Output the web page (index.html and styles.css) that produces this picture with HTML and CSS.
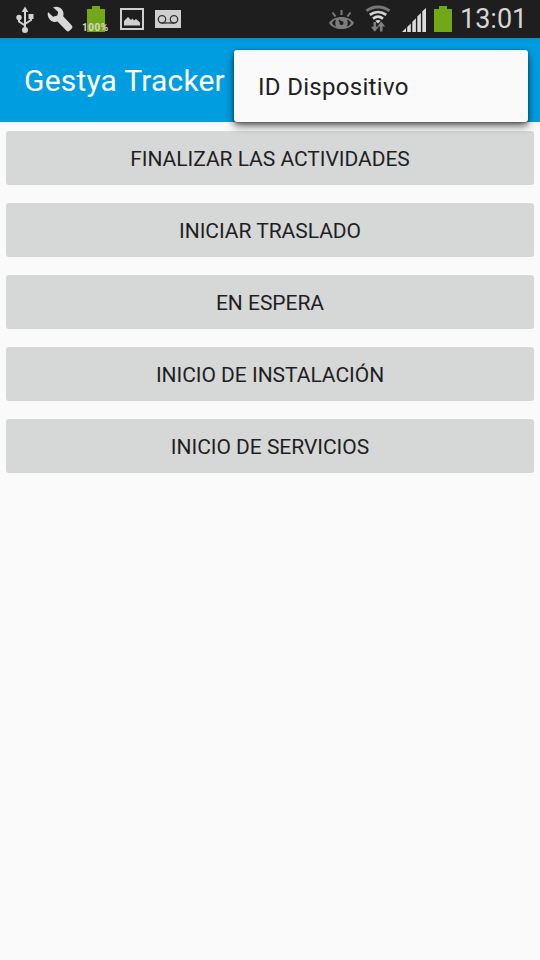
FILE: index.html
```html
<!DOCTYPE html>
<html lang="es">
<head>
    <meta charset="UTF-8">
    <meta name="viewport" content="width=device-width, initial-scale=1.0">
    <title>Gestya Tracker</title>
    <link rel="stylesheet" href="styles.css">
</head>
<body>
    <div class="status-bar">
        <div class="status-left">
            <svg class="icon-usb" width="18" height="28" viewBox="0 0 18 28">
                <path d="M9 4v20M3 12v3.500l6 4M15 11v3l-6 4" fill="none" stroke="#d2d2d2" stroke-width="2"/>
                <path d="M9 0.500l3.300 5.500H5.700z" fill="#d2d2d2"/>
                <circle cx="3" cy="11.500" r="2.700" fill="#d2d2d2"/>
                <rect x="12.500" y="8" width="5" height="5" fill="#d2d2d2"/>
                <circle cx="9" cy="24" r="3" fill="#d2d2d2"/>
            </svg>
            <svg class="icon-wrench" width="26" height="27" viewBox="0 0 26 27">
                <path d="M6 1.200C9.500 0 13 .8 15 3.500c1.700 2.300 1.800 4.500 1.200 6.800l8.600 9.200c.8.9.8 2 0 2.900l-2.300 2.400c-.9.900-2.100.9-3 0l-9-9.200c-2.500.7-5.300.2-7.300-1.700C.9 11.700.2 8.700 1 6l5 4.700 4.300-1.200.9-3.600z" fill="#d8d8d8"/>
            </svg>
            <div class="battery-level">
                <svg width="18" height="26" viewBox="0 0 18 26">
                    <path d="M5 0h8v3h5v23H0V3h5z" fill="#72a818"/>
                </svg>
                <span class="battery-text">100%</span>
            </div>
            <svg class="icon-picture" width="24" height="22" viewBox="0 0 24 22">
                <rect x="1" y="1" width="22" height="20" fill="none" stroke="#cfcfcf" stroke-width="2"/>
                <path d="M4 17.500v-4.500l4-4 3 3 1.500-1.500 1.500 2 2-1.500 4 3.500v3z" fill="#cfcfcf"/>
            </svg>
            <svg class="icon-voicemail" width="26" height="18" viewBox="0 0 26 18">
                <rect width="26" height="18" fill="#cfcfcf"/>
                <path d="M7 13h12" stroke="#333" stroke-width="1.300"/>
                <circle cx="7" cy="9.300" r="3.700" fill="none" stroke="#333" stroke-width="1.300"/>
                <circle cx="19" cy="9.300" r="3.700" fill="none" stroke="#333" stroke-width="1.300"/>
            </svg>
        </div>
        <div class="status-right">
            <svg class="icon-eye" width="25" height="20" viewBox="0 0 25 20">
                <path d="M12.500 0v5M3.500 2.500l3 4M21.500 2.500l-3 4" stroke="#7c7c7c" stroke-width="2"/>
                <path d="M0 13c5-8 20-8 25 0-5 8-20 8-25 0z" fill="#7c7c7c"/>
                <path d="M3 13c1-1.800 2.300-2.900 4-3.700-.9 2.500-.9 4.900 0 7.400-1.700-.8-3-1.900-4-3.700zM22 13c-1-1.800-2.300-2.900-4-3.700.9 2.500.9 4.900 0 7.400 1.700-.8 3-1.900 4-3.700z" fill="#1e1e1e"/>
                <circle cx="12.500" cy="13" r="2" fill="#1e1e1e"/>
                <path d="M12.500 13l-2.500-3" stroke="#1e1e1e" stroke-width="1.500"/>
            </svg>
            <svg class="icon-wifi" width="26" height="27" viewBox="0 0 26 27">
                <path d="M1.500 5.800c6.500-5.200 16.500-5.200 23 0" fill="none" stroke="#777" stroke-width="3"/>
                <path d="M4.800 9.900c5-3.700 11.400-3.700 16.400 0" fill="none" stroke="#d0d0d0" stroke-width="2.800"/>
                <path d="M8 13.600c3-2.300 7-2.300 10 0" fill="none" stroke="#d8d8d8" stroke-width="2.600"/>
                <path d="M10.300 15.800c1.600-1 3.800-1 5.400 0L13 18.500z" fill="#d8d8d8"/>
                <path d="M9.800 17v6M16.200 26.500v-6" stroke="#808080" stroke-width="2.600"/>
                <path d="M5.800 21.800h8l-4 5zM12.200 21.500h8l-4-5z" fill="#808080"/>
            </svg>
            <svg class="icon-signal" width="24" height="24" viewBox="0 0 24 24">
                <path d="M0 24l4-4v4zM5.200 24v-5l3.600-3.600V24zM10.300 24V13.800l3.600-3.600V24zM15.300 24V8.500l3.600-3.600V24zM20.300 24V3.300L24 0v24z" fill="#dcdcdc"/>
            </svg>
            <svg class="icon-battery" width="18" height="26" viewBox="0 0 18 26">
                <path d="M5 0h8v3h5v23H0V3h5z" fill="#72a818"/>
            </svg>
            <span class="clock">13:01</span>
        </div>
    </div>

    <header class="app-bar">
        <h1>Gestya Tracker</h1>
        <div class="menu">
            <div class="menu-item">ID Dispositivo</div>
        </div>
    </header>

    <main class="actions">
        <button class="action-btn">FINALIZAR LAS ACTIVIDADES</button>
        <button class="action-btn">INICIAR TRASLADO</button>
        <button class="action-btn">EN ESPERA</button>
        <button class="action-btn">INICIO DE INSTALACIÓN</button>
        <button class="action-btn">INICIO DE SERVICIOS</button>
    </main>
</body>
</html>
```
FILE: styles.css
```css
body, html {
    margin: 0;
    padding: 0;
    font-family: Roboto, sans-serif;
    background-color: #fafafa;
}
body {
    min-height: 960px;
}
.status-bar {
    display: flex;
    justify-content: space-between;
    height: 38px;
    padding: 0 15px 0 16px;
    box-sizing: border-box;
    background-color: #1e1e1e;
}
.status-left, .status-right {
    display: flex;
    align-items: center;
}
.status-bar svg {
    display: block;
}
.icon-usb {
    margin-top: 2px;
}
.icon-wrench {
    margin-left: 13px;
}
.battery-level {
    position: relative;
    margin-left: 14px;
}
.battery-text {
    position: absolute;
    left: -5px;
    bottom: -1px;
    font-size: 10px;
    line-height: 11px;
    font-weight: bold;
    letter-spacing: 0.5px;
    color: #d8d8c8;
}
.icon-picture {
    margin-left: 15px;
}
.icon-voicemail {
    margin-left: 11px;
}
.icon-eye {
    margin-top: 2px;
}
.icon-wifi {
    margin-left: 11px;
    margin-top: -2px;
}
.icon-signal {
    margin-left: 11px;
    margin-top: 1px;
}
.icon-battery {
    margin-left: 8px;
}
.clock {
    width: 65px;
    margin-left: 8px;
    font-size: 27px;
    line-height: 38px;
    color: #d6d6d6;
}
.app-bar {
    position: relative;
    display: flex;
    align-items: center;
    height: 84px;
    padding-left: 24px;
    background: linear-gradient(#0590cf, #009de0 5px);
}
h1 {
    margin: 0;
    font-size: 30px;
    font-weight: normal;
    letter-spacing: 0.2px;
    color: white;
}
.menu {
    position: absolute;
    top: 12px;
    right: 12px;
    width: 294px;
    height: 72px;
    border-radius: 3px;
    background-color: #fafafa;
    box-shadow: 0 4px 9px rgba(0,0,0,0.6), 0 1px 3px rgba(0,0,0,0.35);
}
.menu-item {
    padding-left: 24px;
    font-size: 24px;
    line-height: 74px;
    letter-spacing: 0.3px;
    color: #212121;
}
.actions {
    display: flex;
    flex-direction: column;
    gap: 18px;
    padding: 9px 6px;
}
.action-btn {
    height: 54px;
    padding: 2px 0 0;
    border: none;
    border-radius: 3px;
    background-color: #d6d7d7;
    font-family: Roboto, sans-serif;
    font-size: 21px;
    letter-spacing: -0.03px;
    color: #1f1f1f;
}
```
